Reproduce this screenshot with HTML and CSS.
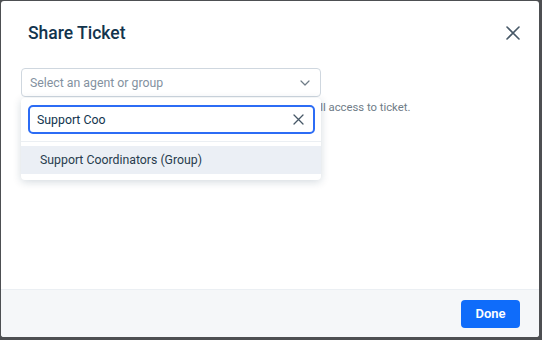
FILE: index.html
```html
<!DOCTYPE html>
<html lang="en">
<head>
    <meta charset="UTF-8">
    <title>Share Ticket</title>
    <link rel="stylesheet" href="styles.css">
</head>
<body>
    <div class="modal">
        <div class="modal-header">
            <h2 class="modal-title">Share Ticket</h2>
            <button class="close-btn" aria-label="Close">
                <svg width="14" height="14" viewBox="0 0 14 14"><path d="M1 1L13 13M13 1L1 13" stroke="#475867" stroke-width="1.6" stroke-linecap="round"/></svg>
            </button>
        </div>

        <div class="modal-body">
            <div class="picker">
                <div class="select">
                    <span class="placeholder">Select an agent or group</span>
                    <svg class="chevron" width="10" height="6" viewBox="0 0 10 6"><path d="M1 1L5 5L9 1" fill="none" stroke="#6f7c87" stroke-width="1.2" stroke-linecap="round" stroke-linejoin="round"/></svg>
                </div>
                <p class="hint">The agents and groups you share this ticket with will gain full access to ticket.</p>

                <div class="dropdown">
                    <div class="search-wrap">
                        <div class="search">
                            <span class="search-text">Support Coo</span>
                            <svg width="11" height="11" viewBox="0 0 11 11"><path d="M1 1L10 10M10 1L1 10" stroke="#475867" stroke-width="1.3" stroke-linecap="round"/></svg>
                        </div>
                    </div>
                    <div class="option">Support Coordinators (Group)</div>
                </div>
            </div>
        </div>

        <div class="modal-footer">
            <button class="btn-primary">Done</button>
        </div>
    </div>
</body>
</html>
```

FILE: styles.css
```css
* {
    margin: 0;
    padding: 0;
    box-sizing: border-box;
}

body {
    background: #4d4f52;
    font-family: Roboto, "Liberation Sans", sans-serif;
    color: #12344d;
    width: 542px;
    height: 340px;
    overflow: hidden;
}

.modal {
    margin: 1px 3px 3px 1px;
    width: 538px;
    height: 336px;
    background: #fff;
    border-radius: 3px;
    display: flex;
    flex-direction: column;
    overflow: hidden;
}

.modal-header {
    display: flex;
    justify-content: space-between;
    align-items: center;
    padding: 19px 19px 0 27px;
    height: 45px;
}

.modal-title {
    font-size: 17.5px;
    font-weight: 500;
    line-height: 26px;
    color: #12344d;
}

.close-btn {
    background: none;
    border: none;
    display: flex;
    cursor: pointer;
}

.modal-body {
    flex: 1;
    padding: 22px 20px 0 20px;
}

.picker {
    position: relative;
    width: 300px;
}

.select {
    height: 29px;
    border: 1px solid #cfd7df;
    border-radius: 4px;
    display: flex;
    align-items: center;
    justify-content: space-between;
    padding: 0 10px 0 8px;
}

.placeholder {
    font-size: 12.3px;
    color: #8391a0;
}

.hint {
    margin-top: 4px;
    font-size: 11.3px;
    color: #6f7c87;
    white-space: nowrap;
    line-height: 14px;
}

.dropdown {
    position: absolute;
    top: 30px;
    left: 0;
    width: 300px;
    background: #fff;
    border-radius: 4px;
    box-shadow: 0 2px 8px rgba(18, 52, 77, 0.18);
    padding-bottom: 6px;
}

.search-wrap {
    padding: 7px 6px 7px 7px;
    border-bottom: 1px solid #ebeff3;
}

.search {
    height: 29px;
    border: 2px solid #2c6cf5;
    border-radius: 5px;
    display: flex;
    align-items: center;
    justify-content: space-between;
    padding: 0 9px 0 7px;
}

.search-text {
    font-size: 12.3px;
    color: #12344d;
}

.option {
    margin-top: 4px;
    height: 28px;
    line-height: 28px;
    padding-left: 19px;
    background: #ebeff5;
    font-size: 12.3px;
    color: #283c4d;
}

.modal-footer {
    height: 48px;
    background: #f5f7f9;
    border-top: 1px solid #ebeff3;
    display: flex;
    justify-content: flex-end;
    align-items: center;
    padding: 0 19px;
}

.btn-primary {
    background: #0f6cfa;
    color: #fff;
    border: none;
    border-radius: 4px;
    width: 59px;
    height: 28px;
    font-family: Roboto, "Liberation Sans", sans-serif;
    font-size: 13px;
    font-weight: 600;
    cursor: pointer;
}
```
